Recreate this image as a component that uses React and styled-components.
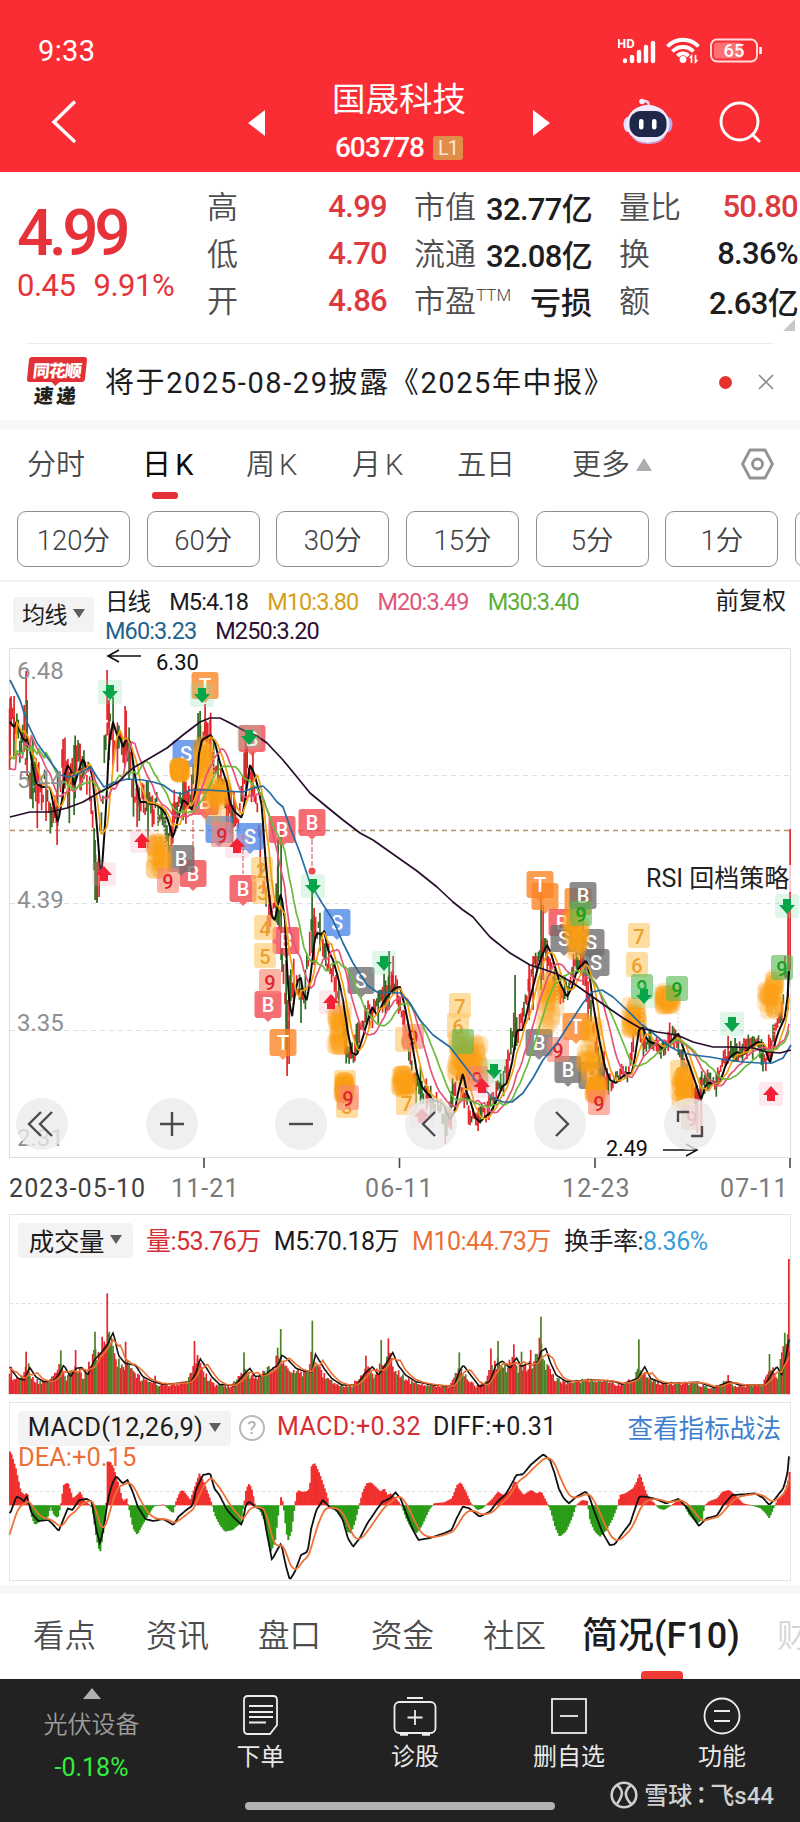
import React from "react";
import styled, { createGlobalStyle, css } from "styled-components";

const GlobalStyle = createGlobalStyle`
  * {
    box-sizing: border-box;
  }
  body {
    margin: 0;
    background: #ffffff;
    font-family: Roboto, "Noto Sans CJK SC", sans-serif;
    color: #1c1c1e;
  }
`;

const flexCenter = css`
  display: flex;
  align-items: center;
  justify-content: center;
`;

const Page = styled.div`
  width: 800px;
  height: 1822px;
  overflow: hidden;
  display: flex;
  flex-direction: column;
`;

/* ---------- header ---------- */

const Header = styled.header`
  height: 172px;
  background: #fb2d34;
  color: #ffffff;
  flex: none;
`;

const StatusBar = styled.div`
  height: 76px;
  padding: 25px 38px 0 38px;
  display: flex;
  justify-content: space-between;
  align-items: center;
`;

const Clock = styled.span`
  font-size: 29px;
  line-height: 50px;
  letter-spacing: 0.4px;
`;

const StatusIcons = styled.div`
  display: flex;
  align-items: center;
  gap: 10px;
`;

const HD = styled.text`
  font-size: 13px;
  font-weight: 700;
  fill: #ffffff;
`;

const NavBar = styled.div`
  height: 96px;
  display: grid;
  grid-template-columns: 248px 302px 1fr;
`;

const NavLeft = styled.div`
  padding: 24px 0 0 51px;
`;

const NavTitle = styled.div`
  display: flex;
  justify-content: space-between;

  > svg {
    margin-top: 34px;
  }
`;

const TitleBlock = styled.div`
  display: flex;
  flex-direction: column;
  align-items: center;
`;

const StockName = styled.div`
  font-size: 33.5px;
  line-height: 40px;
  margin-top: 4px;
`;

const StockCode = styled.div`
  display: flex;
  align-items: center;
  gap: 9px;
  margin-top: 12px;
  font-size: 28px;
  line-height: 32px;
  letter-spacing: -1.1px;
  font-weight: 500;
`;

const LevelTag = styled.span`
  ${flexCenter};
  width: 30px;
  height: 24px;
  border-radius: 3px;
  background: #e28c4a;
  color: #fbe8d8;
  font-size: 20px;
  font-weight: 400;
`;

const NavRight = styled.div`
  display: flex;
  padding: 21px 0 0 73px;
  gap: 46px;
`;

/* ---------- quote ---------- */

const Quote = styled.section`
  height: 171px;
  flex: none;
  display: grid;
  grid-template-columns: 207px 180px 27px 178px 27px 179px;
  position: relative;
`;

const PriceBlock = styled.div`
  padding: 26px 0 0 17px;
  color: #e63238;
`;

const Price = styled.div`
  font-size: 64px;
  font-weight: 500;
  line-height: 72px;
  letter-spacing: -4.4px;
`;

const Change = styled.div`
  display: flex;
  gap: 18px;
  font-size: 31px;
  line-height: 36px;
  letter-spacing: -0.5px;
  margin-top: -2px;
`;

const Facts = styled.div`
  display: flex;
  flex-direction: column;
  padding-top: 11px;
  grid-column: ${({ $col }) => $col};
`;

const Fact = styled.div`
  height: 47px;
  display: flex;
  justify-content: space-between;
  align-items: center;
  white-space: nowrap;
`;

const FactLabel = styled.span`
  font-size: 31px;
  font-weight: 350;
  color: #4e4e50;
  margin-top: -5px;

  sup {
    font-size: 17px;
    line-height: 0;
    vertical-align: 11px;
  }
`;

const FactValue = styled.span`
  font-size: 31px;
  font-weight: 500;
  letter-spacing: ${({ $wide }) => ($wide ? 0 : -0.7)}px;
  color: ${({ $up }) => ($up ? "#dd3a3f" : "#1d1d1f")};
`;

const Corner = styled.i`
  position: absolute;
  right: 5px;
  bottom: 12px;
  border-left: 12px solid transparent;
  border-bottom: 12px solid #c8c8c8;
`;

const Notice = styled.section`
  height: 77px;
  flex: none;
  margin: 0 26px;
  border-top: 1px solid #ececec;
  display: flex;
  align-items: center;
`;

const BrandMark = styled.div`
  width: 60px;
  margin: 0 18px 0 1px;
  display: flex;
  flex-direction: column;
  align-items: center;
  font-weight: 900;
`;

const BrandTop = styled.span`
  ${flexCenter};
  position: relative;
  width: 58px;
  height: 25px;
  border-radius: 3px;
  transform: skewX(-6deg);
  background: #e23136;
  color: #ffffff;
  font-size: 17px;
  letter-spacing: -1px;

  &::after {
    content: "";
    position: absolute;
    left: 24px;
    top: 24px;
    border: 5px solid transparent;
    border-top-color: #e23136;
    border-bottom-width: 0;
  }
`;

const BrandBottom = styled.span`
  margin-top: 4px;
  transform: skewX(-6deg);
  font-size: 19.5px;
  line-height: 21px;
  letter-spacing: 3px;
  color: #222222;
`;

const NoticeText = styled.span`
  font-size: 29px;
  letter-spacing: 1.6px;
  white-space: nowrap;
  flex: 1;
  margin-top: -4px;
`;

const Dot = styled.i`
  width: 13px;
  height: 13px;
  border-radius: 50%;
  background: #e6322f;
  margin-right: 26px;
`;

const Strip = styled.div`
  height: ${({ $h }) => $h}px;
  flex: none;
  background: #f7f7f8;
`;

/* ---------- period tabs ---------- */

const Periods = styled.nav`
  height: 82px;
  flex: none;
  display: flex;
  align-items: center;
  padding: 0 26px 12px 27px;
`;

const Period = styled.span`
  position: relative;
  width: ${({ $w }) => $w}px;
  margin-top: -4px;
  font-size: 29px;
  font-weight: ${({ $on }) => ($on ? 400 : 350)};
  color: ${({ $on }) => ($on ? "#0b0b0b" : "#4a4a4c")};
  word-spacing: -3px;
  white-space: nowrap;

  ${({ $on }) =>
    $on &&
    css`
      &::after {
        content: "";
        position: absolute;
        left: 10px;
        bottom: -16px;
        width: 26px;
        height: 7px;
        border-radius: 3px;
        background: #e33036;
      }
    `}
`;

const Triangle = styled.i`
  display: inline-block;
  border: ${({ $size }) => $size}px solid transparent;
  border-top-width: 0;
  border-bottom: ${({ $h }) => $h}px solid ${({ $color }) => $color};
  ${({ $down }) => $down && "transform: rotate(180deg);"}
`;

const SettingsIcon = styled.svg`
  margin-left: auto;
`;

const Minutes = styled.div`
  height: 71px;
  flex: none;
  display: flex;
  gap: 16.7px;
  padding-left: 17px;
  border-bottom: 2px solid #f0f0f1;
`;

const Minute = styled.span`
  ${flexCenter};
  flex: none;
  width: 113px;
  height: 56px;
  padding-bottom: 3px;
  border: 1px solid #8e8e90;
  border-radius: 9px;
  font-size: 27.5px;
  font-weight: 350;
  color: #404042;
`;

/* ---------- chart ---------- */

const Legend = styled.div`
  height: 66px;
  flex: none;
  display: flex;
  align-items: flex-start;
  padding: 4px 14px 0 13px;
  font-size: 23.5px;
`;

const Chip = styled.span`
  ${flexCenter};
  flex: none;
  gap: 6px;
  width: ${({ $w }) => $w}px;
  height: 35px;
  padding-bottom: 3px;
  border-radius: 4px;
  background: #f4f3f4;
  font-size: ${({ $size }) => $size}px;
  letter-spacing: ${({ $track }) => $track || -0.4}px;
  white-space: nowrap;
`;

const Averages = styled.div`
  flex: 1;
  display: flex;
  flex-wrap: wrap;
  column-gap: 19px;
  padding: 0 90px 0 11px;
  line-height: 29px;
  letter-spacing: -0.9px;
  margin-top: 2px;
`;

const Tint = styled.span`
  color: ${({ $c }) => $c};
`;

const Restore = styled.span`
  line-height: 30px;
`;

const LegendChip = styled.div`
  padding-top: 11px;
`;

const ChartBox = styled.div`
  height: 520px;
  flex: none;
  position: relative;
  svg {
    display: block;
  }
`;

const Controls = styled.div`
  position: absolute;
  left: 16px;
  right: 84px;
  top: 450px;
  display: flex;
  justify-content: space-between;
`;

const RoundButton = styled.span`
  ${flexCenter};
  width: 52px;
  height: 52px;
  border-radius: 50%;
  background: rgba(235, 235, 236, 0.78);
`;

const ChartText = styled.text`
  font-size: ${({ $size }) => $size || 24}px;
  fill: ${({ $fill }) => $fill || "#8f8f91"};
`;

const MarkText = styled.text`
  font-size: ${({ $size }) => $size}px;
  font-weight: 500;
  text-anchor: middle;
`;

const Dates = styled.div`
  height: 46px;
  flex: none;
  display: grid;
  grid-template-columns: 162px 194px 197px 158px 1fr;
  padding: 4px 9px 0 9px;
  font-size: 25px;
  line-height: 34px;
  color: #7a7a7c;
  letter-spacing: 1.1px;
  white-space: nowrap;

  span:first-child {
    color: #404042;
  }
`;

const Panel = styled.section`
  height: ${({ $h }) => $h}px;
  flex: none;
  margin: 0 9px ${({ $gap }) => $gap}px;
  border: 1px solid #e4e4e6;
  position: relative;

  > svg {
    position: absolute;
    left: -10px;
    top: -1px;
  }
`;

const PanelLegend = styled.div`
  position: relative;
  z-index: 1;
  display: flex;
  align-items: center;
  gap: ${({ $gap }) => $gap}px;
  padding: 8px 8px 0;
  font-size: 25px;
  letter-spacing: ${({ $track }) => $track}px;
  white-space: nowrap;
`;

const Reading = styled.span`
  color: ${({ $c }) => $c || "#1c1c1e"};
  margin-top: -4px;
`;

const SecondLine = styled.div`
  position: relative;
  z-index: 1;
  padding-left: 8px;
  margin-top: -3px;
  font-size: 25.5px;
  line-height: 28px;
  letter-spacing: 0;
  color: #ea7038;
`;

const Help = styled.span`
  ${flexCenter};
  width: 26px;
  height: 26px;
  margin: -2px 0 0 -4px;
  border: 2px solid #b9b9bb;
  border-radius: 50%;
  color: #a9a9ab;
  font-size: 19px;
`;

const Guide = styled.span`
  margin: -4px 1px 0 auto;
  font-size: 25.6px;
  letter-spacing: 0;
  color: #3d7fce;
`;

/* ---------- bottom ---------- */

const Tabs = styled.nav`
  height: 85px;
  flex: none;
  display: flex;
  align-items: center;
  padding: 0 0 0 33px;
  overflow: hidden;
`;

const Tab = styled.span`
  position: relative;
  flex: none;
  width: ${({ $w }) => $w}px;
  line-height: 85px;
  white-space: nowrap;
  font-size: ${({ $on }) => ($on ? 36 : 31.5)}px;
  font-weight: ${({ $on }) => ($on ? 500 : 350)};
  color: ${({ $on, $faded }) => ($on ? "#1c1c1e" : $faded ? "#d5d5d7" : "#4c4c4e")};

  ${({ $on }) =>
    $on &&
    css`
      &::after {
        content: "";
        position: absolute;
        left: 59px;
        bottom: 0;
        width: 42px;
        height: 8px;
        border-radius: 4px 4px 0 0;
        background: #f23a34;
      }
    `}
`;

const BottomBar = styled.footer`
  height: 143px;
  flex: none;
  background: #222222;
  color: #e9e9e9;
  display: grid;
  grid-template-columns: 185px 151px 158px 150px 156px;
  position: relative;
`;

const Sector = styled.div`
  display: flex;
  flex-direction: column;
  align-items: center;
  padding: 9px 2px 0 0;
  font-size: 24px;
  color: #9c9c9c;
  line-height: 36px;
`;

const SectorName = styled.span`
  margin-top: 8px;
  font-weight: 350;
`;

const Fall = styled.span`
  margin-top: 7px;
  color: #33ee3a;
  font-size: 25px;
`;

const Action = styled.div`
  display: flex;
  flex-direction: column;
  align-items: center;
  padding-top: 15px;
  font-size: 24px;
  line-height: 34px;

  svg {
    margin-bottom: 4px;
  }
`;

const HomeBar = styled.i`
  position: absolute;
  left: 245px;
  bottom: 12px;
  width: 310px;
  height: 8px;
  border-radius: 4px;
  background: #b3b3b3;
`;

const Watermark = styled.div`
  position: absolute;
  right: 26px;
  bottom: 9px;
  display: flex;
  align-items: center;
  gap: 6px;
  font-size: 24px;
  line-height: 34px;
  font-weight: 500;
  color: #cfcfcf;
`;

const Colon = styled.span`
  font-family: "Noto Sans CJK TC", sans-serif;
  margin: 0 -3px;
`;

/* ---------- chart data ---------- */

const BARS = 536;
const LEFT = 9.5;
const STEP = 781 / BARS;

// small seeded generator so that the bars are the same on every render
const seeded = (seed) => {
  let n = seed * 7919 + 104729;
  const next = () => {
    n = (n * 16807) % 2147483647;
    return n / 2147483647;
  };
  next();
  next();
  return next;
};

const toPoints = (text) =>
  text
    .trim()
    .split(/\s+/)
    .map((p) => p.split(",").map(Number));

const at = (points, x) => {
  if (x <= points[0][0]) return points[0][1];
  for (let i = 1; i < points.length; i++) {
    const [x1, y1] = points[i];
    if (x <= x1) {
      const [x0, y0] = points[i - 1];
      return y0 + ((y1 - y0) * (x - x0)) / (x1 - x0 || 1);
    }
  }
  return points[points.length - 1][1];
};

const sample = (points) => Array.from({ length: BARS }, (_, i) => at(points, LEFT + i * STEP));

const average = (values, count, before) =>
  values.map((_, i) => {
    let sum = 0;
    for (let k = 0; k < count; k++) sum += i - k * 5 >= 0 ? values[i - k * 5] : before;
    return sum / count;
  });

const linePath = (values) =>
  values.map((y, i) => `${i ? "L" : "M"}${(LEFT + i * STEP).toFixed(1)} ${y.toFixed(1)}`).join("");

const curve = (points) => "M" + points.map((p) => p.join(" ")).join("L");

const MA5 = toPoints(`10,722 14,727 17,722 22,737 26,742 28,737 32,763 36,783 42,787 50,787 53,803
  58,823 62,800 65,773 68,765 72,773 74,787 78,773 83,758 86,768 90,767 93,780 97,827 101,880 104,840
  107,790 109,743 113,722 117,735 120,738 123,747 127,738 131,743 133,763 137,787 140,802 145,802
  150,803 157,805 163,810 168,820 173,838 177,823 183,800 187,803 192,810 197,780 199,753 202,740
  207,737 211,735 215,743 220,763 227,783 230,803 235,812 242,818 246,793 250,765 254,773 258,787
  262,807 265,853 268,887 272,917 275,920 278,905 281,893 285,920 287,967 289,1000 292,1017 295,993
  298,980 301,978 303,993 307,1000 310,980 312,963 315,937 318,933 322,935 324,930 328,950 333,960
  338,977 343,1000 348,1033 352,1053 357,1055 362,1040 367,1023 372,1007 377,1015 383,1003 390,993
  395,988 400,987 405,1007 412,1043 417,1073 422,1087 427,1093 433,1100 443,1103 450,1120 455,1110
  458,1093 463,1073 467,1093 470,1100 475,1117 480,1122 485,1117 490,1113 497,1100 502,1087 507,1083
  512,1063 517,1030 523,1030 528,1007 533,987 538,967 543,953 547,945 551,953 555,967 560,983 567,997
  572,987 577,970 582,965 586,960 589,970 593,1003 597,1027 600,1043 605,1067 610,1080 616,1083
  622,1077 627,1073 632,1073 635,1057 639,1030 643,1027 647,1040 652,1043 658,1043 663,1050 670,1043
  678,1033 683,1047 690,1067 697,1087 701,1100 705,1087 708,1083 715,1083 720,1083 725,1067 730,1057
  737,1052 743,1055 750,1047 758,1042 763,1043 770,1063 773,1050 778,1033 785,1017 788,993 791,930`);

const MA60 = toPoints(`10,680 20,700 27,722 37,743 47,757 55,768 60,775 70,777 80,773 91,767 97,777
  104,787 113,783 127,779 143,780 153,782 163,785 173,792 182,794 190,790 207,790 223,791 243,792
  253,788 263,786 270,793 277,802 283,807 290,827 300,853 310,883 322,903 333,920 343,943 353,963
  367,985 377,992 400,993 410,1003 420,1020 433,1035 450,1047 460,1060 473,1077 483,1088 493,1098
  503,1102 512,1102 523,1093 533,1078 543,1060 557,1043 570,1023 583,1003 592,992 602,990 613,997
  627,1010 640,1023 653,1033 667,1045 680,1052 693,1055 710,1057 727,1060 743,1062 760,1063 772,1063
  783,1058 791,1045`);

const MA250 = toPoints(`10,817 30,812 50,812 67,808 83,802 100,792 117,783 133,768 150,758 167,748
  183,735 200,722 210,718 220,718 230,723 243,730 257,736 267,743 283,760 297,777 310,793 327,807
  343,820 360,833 373,840 400,859 417,871 437,887 453,902 463,910 473,917 490,937 510,953 530,965
  543,969 557,974 573,983 590,995 607,1007 623,1018 640,1028 657,1032 677,1035 693,1042 713,1047
  733,1047 753,1048 767,1052 780,1053 791,1050`);

const ma5 = sample(MA5);
const ma10 = average(ma5, 2, 790);
const ma20 = average(ma5, 4, 784);
const ma30 = average(ma5, 6, 765);

// x, top, bottom, rising
const SPIKES = [
  [10, 698, 760, 1],
  [14, 696, 740, 1],
  [26, 671, 750, 1],
  [27, 700, 760, 0],
  [57, 790, 845, 1],
  [63, 739, 800, 1],
  [74, 745, 815, 0],
  [80, 744, 790, 1],
  [95, 840, 900, 0],
  [97, 862, 903, 0],
  [99, 850, 897, 1],
  [107, 670, 720, 1],
  [109, 700, 760, 1],
  [113, 697, 730, 0],
  [125, 706, 750, 1],
  [137, 790, 827, 1],
  [198, 713, 760, 0],
  [200, 711, 750, 0],
  [205, 704, 740, 1],
  [210, 720, 760, 1],
  [246, 747, 800, 1],
  [278, 840, 925, 0],
  [281, 830, 960, 0],
  [287, 1000, 1076, 1],
  [289, 990, 1064, 1],
  [286, 960, 1050, 0],
  [312, 880, 953, 0],
  [314, 915, 955, 1],
  [389, 951, 1010, 0],
  [393, 956, 990, 1],
  [450, 1115, 1128, 1],
  [478, 1110, 1131, 1],
  [515, 975, 1050, 0],
  [529, 965, 1020, 1],
  [533, 956, 1010, 1],
  [541, 891, 990, 0],
  [543, 905, 980, 1],
  [583, 920, 985, 1],
  [697, 1085, 1133, 1],
  [701, 1080, 1136, 1],
  [728, 1036, 1060, 1],
  [735, 1038, 1055, 0],
  [790, 829, 970, 1],
  [788, 910, 1010, 1],
];

const priceBars = (() => {
  const random = seeded(77);
  const bars = [];
  for (let i = 0; i < BARS; i += 1) {
    const x = LEFT + i * STEP;
    const next = ma5[Math.min(BARS - 1, i + 3)];
    const range = x < 150 ? 27 : x < 330 ? 23 : x < 620 ? 14 : 10;
    const mid = next + (random() - 0.5) * range;
    const half = 3 + random() * random() * range * 1.3;
    bars.push([x, mid - half, mid + half, random() > 0.4 ? 1 : 0]);
  }
  return bars.concat(SPIKES);
})();

const VOLUME = toPoints(`18,485 35,520 48,525 58,487 70,515 85,530 105,528 115,510 125,480 138,515
  150,490 160,487 172,510 185,465 200,440 210,420 222,382 232,450 245,475 265,480 280,515 300,530
  320,538 350,535 375,530 385,500 392,460 405,490 415,515 430,538 460,542 480,505 490,490 500,515
  520,510 535,490 545,480 553,450 565,465 580,490 600,500 612,500 618,447 635,490 650,520 670,540
  700,540 715,505 730,485 742,510 755,480 770,442 780,480 795,510 815,530 850,540 890,545 900,500
  908,480 920,505 940,545 960,530 972,480 985,468 1000,490 1012,458 1022,485 1035,475 1045,480
  1055,470 1060,440 1070,430 1078,470 1090,510 1110,530 1160,525 1200,528 1220,538 1250,520 1264,485
  1275,520 1300,535 1370,532 1400,548 1430,530 1450,540 1500,540 1515,500 1523,485 1532,510 1540,460
  1548,390`).map(([x, y]) => [x / 1.96, y / 3 - 9]);

const VOLUME_SPIKES = toPoints(`22,485,1 51,440,1 56,475,0 119,436,0 148,435,1 186,380,0 184,435,0
  200,395,1 210,265,1 214,380,0 246,410,1 174,470,1 381,408,1 387,450,1 304,512,1 478,442,0 544,428,0
  550,372,0 612,347,0 717,452,1 747,405,0 761,400,1 900,442,0 962,430,1 976,408,0 1007,418,1
  1022,440,0 1040,435,1 1060,335,0 1057,398,1 1252,403,0 1508,447,0 1427,510,1 1541,420,1
  1546,162,1`).map(([x, y, up]) => [x / 1.96, y / 3 - 9, up]);

const volume5 = sample(VOLUME);
const volume10 = average(volume5, 2, 155);

const volumeBars = (() => {
  const random = seeded(2023);
  return volume5
    .map((_, i) => {
      const level = 180 - volume5[Math.min(BARS - 1, i + 3)];
      return [LEFT + i * STEP, 180 - level * (0.75 + random() * 0.38), random() > 0.36 ? 1 : 0];
    })
    .concat(VOLUME_SPIKES);
})();

const macdPoint = ([x, y]) => [x / 1.96, y / 3 - 7];

const HISTOGRAM = toPoints(`20,170 30,220 40,290 48,300 52,290 56,325 62,370 68,390 80,375 92,370
  98,335 105,360 112,370 118,331 124,270 132,262 142,310 150,300 156,290 165,318 172,325 180,340
  188,430 195,475 203,400 207,331 209,200 215,200 222,220 230,260 240,320 247,310 252,340 260,400
  268,420 278,390 288,365 300,335 320,328 338,355 344,320 352,290 357,285 365,300 372,315 380,280
  390,235 398,260 408,300 414,325 420,360 430,390 440,410 455,405 470,385 477,331 482,280 488,265
  494,290 498,325 508,345 518,380 525,440 530,470 538,440 545,350 550,305 554,325 558,380 563,440
  570,410 577,331 582,285 590,290 600,290 606,280 610,210 616,205 625,235 632,265 640,300 644,331
  655,345 670,370 680,410 687,415 695,380 703,331 710,290 718,265 726,262 735,275 745,290 752,280
  758,300 765,295 772,305 780,320 786,331 795,370 805,400 815,415 825,395 840,345 850,325 870,322
  885,310 895,270 902,262 912,290 922,325 935,345 945,340 955,325 965,310 975,290 985,300 1000,285
  1008,255 1015,280 1025,300 1040,285 1050,295 1060,290 1070,320 1078,345 1088,400 1096,425 1108,410
  1120,370 1128,331 1140,315 1150,318 1156,380 1165,410 1175,425 1188,405 1200,370 1210,331 1214,300
  1225,295 1240,280 1247,260 1253,235 1260,270 1270,310 1280,322 1290,340 1300,345 1315,331 1330,312
  1340,331 1350,360 1365,385 1375,375 1380,331 1390,318 1405,310 1415,290 1428,285 1440,300 1455,325
  1470,330 1490,340 1500,355 1507,370 1515,340 1525,310 1535,300 1545,250 1549,200`).map(macdPoint);

const DIFF = toPoints(`20,355 32,305 40,310 48,320 52,300 62,355 75,378 95,375 105,390 115,408
  125,370 133,340 142,345 155,315 170,312 180,320 188,400 196,445 203,400 212,310 220,265 228,243
  240,265 250,255 260,290 270,335 285,372 300,378 320,372 340,390 350,365 365,345 377,332 385,280
  398,240 412,235 420,280 430,300 445,345 460,370 474,390 482,330 488,320 500,335 515,345 525,430
  533,495 545,460 551,445 560,510 568,555 578,530 590,480 603,470 610,400 620,345 633,315 645,335
  660,345 672,375 682,430 692,455 705,430 720,385 740,340 750,320 765,310 775,292 785,310 795,350
  808,400 820,435 845,428 870,415 885,405 895,370 907,335 920,340 940,365 960,350 975,320 990,300
  1000,275 1012,240 1025,238 1040,210 1055,190 1065,178 1078,195 1087,235 1095,280 1105,310 1115,325
  1130,305 1148,290 1155,305 1165,350 1180,410 1195,450 1205,448 1220,415 1235,385 1245,340 1253,305
  1265,305 1285,312 1305,325 1330,312 1345,335 1360,370 1370,393 1385,370 1405,362 1418,330 1435,300
  1460,298 1480,295 1495,308 1508,330 1520,310 1535,280 1543,240 1549,145`).map(macdPoint);

const diff = sample(DIFF);
const dea = (() => {
  let last = 138;
  return diff.map((v) => {
    last = last * 0.8 + v * 0.2;
    return last;
  });
})();

/* ---------- signals on the price chart ---------- */

const COLORS = {
  red: "#f0444b",
  blue: "#4d86e8",
  orange: "#fb8423",
  gray: "#6e6c6b",
};

// x, y, letter, colour
const TRADES = [
  [205, 686, "T", "orange"],
  [186, 754, "S", "blue"],
  [252, 739, "B", "red"],
  [193, 874, "B", "red"],
  [181, 859, "B", "gray"],
  [219, 830, "", "blue"],
  [250, 837, "S", "blue"],
  [205, 802, "B", "red"],
  [282, 830, "B", "red"],
  [312, 823, "B", "red"],
  [243, 889, "B", "red"],
  [286, 941, "B", "red"],
  [268, 1005, "B", "red"],
  [283, 1043, "T", "orange"],
  [337, 923, "S", "blue"],
  [361, 981, "S", "gray"],
  [545, 897, "", "orange"],
  [540, 885, "T", "orange"],
  [562, 923, "B", "red"],
  [564, 939, "S", "gray"],
  [578, 902, "", "orange"],
  [583, 896, "B", "gray"],
  [591, 943, "S", "gray"],
  [596, 963, "S", "gray"],
  [539, 1043, "B", "gray"],
  [576, 1027, "T", "orange"],
  [568, 1070, "B", "gray"],
  [592, 1076, "B", "gray"],
];

// clouds of stacked countdown tags: x, y, half width, half height
const CLOUDS = [
  [161, 856, 7, 14],
  [180, 770, 2, 3],
  [203, 770, 2, 26],
  [217, 800, 6, 18],
  [339, 1028, 4, 18],
  [344, 1088, 2, 6],
  [404, 1080, 5, 8],
  [463, 1058, 8, 24],
  [474, 1062, 6, 18],
  [575, 935, 6, 16],
  [550, 1003, 6, 26],
  [590, 1050, 6, 30],
  [596, 1088, 3, 6],
  [634, 1018, 4, 14],
  [667, 998, 5, 9],
  [683, 1088, 4, 14],
  [771, 995, 5, 16],
];

// x, y, digit, tint
const COUNTS = [
  [262, 870, "2", "y"],
  [263, 892, "3", "y"],
  [265, 928, "4", "y"],
  [265, 956, "5", "y"],
  [345, 1083, "6", "y"],
  [347, 1106, "3", "y"],
  [406, 1040, "6", "y"],
  [407, 1103, "7", "y"],
  [460, 1006, "7", "y"],
  [458, 1026, "6", "y"],
  [639, 936, "7", "y"],
  [637, 965, "6", "y"],
  [681, 1073, "1", "y"],
];

const LAST_COUNTS = [
  [270, 982, "9", "r"],
  [168, 881, "9", "r"],
  [222, 835, "9", "r"],
  [348, 1098, "9", "r"],
  [413, 1037, "9", "r"],
  [463, 1042, "", "g"],
  [477, 1079, "9", "r"],
  [581, 914, "9", "g"],
  [558, 1050, "9", "r"],
  [599, 1103, "9", "r"],
  [642, 987, "9", "g"],
  [677, 989, "9", "g"],
  [692, 1118, "9", "r"],
  [782, 968, "9", "g"],
];

const TINTS = {
  y: { back: "#fdc869", text: "#eda12c" },
  r: { back: "#f98570", text: "#dd2530" },
  g: { back: "#58b955", text: "#16a01c" },
};

// x, y, direction
const ARROWS = [
  [110, 692, "down"],
  [202, 695, "down"],
  [249, 737, "down"],
  [313, 886, "down"],
  [384, 963, "down"],
  [494, 1071, "down"],
  [644, 996, "down"],
  [732, 1024, "down"],
  [787, 906, "down"],
  [142, 841, "up"],
  [104, 874, "up"],
  [237, 846, "up"],
  [331, 1002, "up"],
  [482, 1086, "up"],
  [422, 1116, "up"],
  [771, 1094, "up"],
];

const Trade = ({ x, y, letter, color }) => (
  <g>
    <rect x={x - 13.5} y={y - 14} width="27" height="27" rx="3" fill={COLORS[color]} opacity="0.78" />
    <path d={`M${x - 4} ${y + 13}h8l-4 4z`} fill={COLORS[color]} opacity="0.78" />
    {letter && (
      <MarkText x={x} y={y + 7} $size={20} fill="#ffffff">
        {letter}
      </MarkText>
    )}
  </g>
);

const Count = ({ x, y, digit, tint }) => (
  <g>
    <rect x={x - 11} y={y - 13} width="22" height="25" rx="3" fill={TINTS[tint].back} opacity="0.62" />
    {digit && (
      <MarkText x={x} y={y + 8} $size={20} fill={TINTS[tint].text}>
        {digit}
      </MarkText>
    )}
  </g>
);

const Arrow = ({ x, y, dir }) => {
  const down = dir === "down";
  const s = down ? 1 : -1;
  return (
    <g>
      <rect x={x - 12} y={y - 12} width="24" height="24" rx="3" fill={down ? "#7fe0a8" : "#f9a5b5"} opacity="0.25" />
      <path
        d={`M${x - 4} ${y - 7 * s}h8v${6 * s}h4l-8 ${9 * s}l-8 ${-9 * s}h4z`}
        fill={down ? "#06a548" : "#f51f36"}
      />
    </g>
  );
};

const Cloud = ({ x, y, w, h, seed }) => {
  const random = seeded(seed);
  return (
    <g fill="#fb9d15">
      {Array.from({ length: 22 }, (_, i) => (
        <rect
          key={i}
          x={x - 9 + (random() * 2 - 1) * w}
          y={y - 10 + (random() * 2 - 1) * h}
          width="18"
          height="20"
          rx="6"
          opacity="0.26"
        />
      ))}
    </g>
  );
};

const PriceChart = () => (
  <svg width="800" height="520" viewBox="0 648 800 520">
    <path d="M9.5 1157V648.5H790.5V1157" fill="none" stroke="#dedee0" />
    <path d="M9 1157.5H791" stroke="#dedee0" />
    <g stroke="#dfdfe2" strokeDasharray="5 4">
      <path d="M10 775.5H790" />
      <path d="M10 903.5H790" />
      <path d="M10 1030.5H790" />
    </g>
    <path d="M10 830.5H790" stroke="#b2946a" strokeDasharray="5 4" strokeWidth="1.3" />

    {priceBars.map(([x, top, bottom, up], i) => (
      <rect
        key={i}
        x={x - 0.75}
        y={top}
        width={1.7}
        height={bottom - top}
        fill={up ? "#e3262b" : "#2f6b22"}
      />
    ))}

    {TRADES.map(([x, y, letter, color]) => (
      <Trade key={`${x}-${y}`} x={x} y={y} letter={letter} color={color} />
    ))}
    {COUNTS.map(([x, y, digit, tint]) => (
      <Count key={`${x}-${y}`} x={x} y={y} digit={digit} tint={tint} />
    ))}
    {CLOUDS.map(([x, y, w, h], i) => (
      <Cloud key={i} x={x} y={y} w={w} h={h} seed={i + 3} />
    ))}
    {LAST_COUNTS.map(([x, y, digit, tint]) => (
      <Count key={`${x}-${y}`} x={x} y={y} digit={digit} tint={tint} />
    ))}

    <g fill="none" strokeWidth="1.7" strokeLinejoin="round">
      <path d={linePath(ma5)} stroke="#0d0a0a" strokeWidth="2" />
      <path d={linePath(ma10)} stroke="#f2a012" />
      <path d={linePath(ma20)} stroke="#e75377" />
      <path d={linePath(ma30)} stroke="#6cb93b" />
      <path d={curve(MA60)} stroke="#256ba3" />
      <path d={curve(MA250)} stroke="#260c2b" />
    </g>

    <g>
      <ChartText x="17" y="679">6.48</ChartText>
      <ChartText x="17" y="788">5.44</ChartText>
      <ChartText x="17" y="908">4.39</ChartText>
      <ChartText x="17" y="1031">3.35</ChartText>
      <ChartText x="17" y="1146">2.31</ChartText>
    </g>

    <g stroke="#d5464c" strokeDasharray="5 2">
      <path d="M193 820V860" />
      <path d="M243 835V874" />
      <path d="M312 840V870" />
    </g>
    <g stroke="#e2d7a8" strokeDasharray="2 2">
      <path d="M158 815V840" />
      <path d="M165 815V845" />
      <path d="M214 750V785" />
      <path d="M557 980V1035" />
      <path d="M678 1005V1030" />
      <path d="M774 1010V1035" />
      <path d="M642 1002V1025" />
    </g>
    <circle cx="312" cy="871" r="3.5" fill="#ee4b50" />

    {ARROWS.map(([x, y, dir]) => (
      <Arrow key={`${x}-${y}`} x={x} y={y} dir={dir} />
    ))}

    <path d="M141 656H108M119 650L108 656L119 662" fill="none" stroke="#111111" strokeWidth="1.7" />
    <ChartText x="156" y="670" $size={22} $fill="#111111">6.30</ChartText>
    <rect x="646" y="865" width="145" height="27" fill="#ffffff" opacity="0.75" />
    <ChartText x="646" y="887" $size={25} $fill="#222222">RSI 回档策略</ChartText>
    <path d="M663 1150H697M686 1144L697 1150L686 1156" fill="none" stroke="#111111" strokeWidth="1.5" />
    <ChartText x="606" y="1156" $size={21.5} $fill="#111111">2.49</ChartText>
    <path d="M204 1158V1168M399.5 1158V1168M595 1158V1168M790 1158V1168" stroke="#4a4a4c" strokeWidth="1.6" />
  </svg>
);

const VolumeChart = () => (
  <svg width="800" height="181" viewBox="0 0 800 181">
    <path d="M10 89.5H790" stroke="#dcdce2" strokeDasharray="3 3" />
    {volumeBars.map(([x, top, up], i) => (
      <rect
        key={i}
        x={x - 0.75}
        y={top}
        width={1.7}
        height={180 - top}
        fill={up ? "#e5262c" : "#4c8128"}
      />
    ))}
    <path d={linePath(volume5)} fill="none" stroke="#171310" strokeWidth="1.6" />
    <path d={linePath(volume10)} fill="none" stroke="#ee7030" strokeWidth="1.6" />
  </svg>
);

const MacdChart = () => (
  <svg width="800" height="179" viewBox="0 0 800 179">
    <path d="M10 89.5H790" stroke="#dcdce2" strokeDasharray="3 3" />
    {sample(HISTOGRAM).map((y, i) => (
      <rect
        key={i}
        x={LEFT + i * STEP - 0.5}
        y={Math.min(y, 103.3)}
        width={STEP + 0.6}
        height={Math.max(0.6, Math.abs(y - 103.3))}
        fill={y < 103.3 ? "#f0302e" : "#2a9b16"}
      />
    ))}
    <path d={linePath(diff)} fill="none" stroke="#111111" strokeWidth="1.8" />
    <path d={linePath(dea)} fill="none" stroke="#ee7236" strokeWidth="1.8" />
  </svg>
);

/* ---------- icons ---------- */

const SignalIcon = () => (
  <svg width="38" height="26" viewBox="619 37 38 26">
    <HD x="618" y="47">HD</HD>
    <g stroke="#ffffff" strokeWidth="4.4" strokeLinecap="round">
      <path d="M626 60V59.5M633 60V56M640 60V51M647 60V46M654 60V42" />
    </g>
  </svg>
);

const WifiIcon = () => (
  <svg width="34" height="27" viewBox="0 0 34 27">
    <g fill="none" stroke="#ffffff" strokeWidth="3.8">
      <path d="M1.5 9.5C10 .5 24 .5 32.500 9.5" />
      <path d="M6.5 14.5C12 8.5 22 8.5 27.500 14.5" />
      <path d="M11.5 19C14.500 15.5 19.500 15.5 22.500 19" />
    </g>
    <circle cx="17" cy="22.5" r="3.4" fill="#ffffff" />
    <path d="M25.500 26V19l-2 2M29.500 18v7l2-2" fill="none" stroke="#ffffff" strokeWidth="1.7" />
  </svg>
);

const BatteryIcon = () => (
  <svg width="52" height="25" viewBox="0 0 52 25">
    <rect x="1" y="1.500" width="46" height="22" rx="6" fill="none" stroke="#ffdcdc" strokeWidth="1.9" />
    <rect x="4" y="4.500" width="28" height="16" rx="3" fill="#ff7072" />
    <path d="M50.500 9v7" stroke="#ffffff" strokeWidth="2.5" />
    <MarkText x="24" y="19" $size={18.5} fill="#ffffff">65</MarkText>
  </svg>
);

const RobotIcon = () => (
  <svg width="50" height="48" viewBox="623 97 50 48">
    <path d="M649 107c0-5-1-6-6-6" fill="none" stroke="#e9dcf4" strokeWidth="2.5" />
    <circle cx="642" cy="101.500" r="2.8" fill="#f8ecf6" />
    <ellipse cx="628" cy="124.500" rx="4.500" ry="7.500" fill="#e6e0fb" />
    <ellipse cx="668" cy="124.500" rx="4.500" ry="7.500" fill="#b7aaf5" />
    <ellipse cx="648" cy="124" rx="21.500" ry="19" fill="#eeebff" />
    <path d="M631 134c8 12 27 12 35 0-2 7-9 10-17.500 10S633 141 631 134z" fill="#b9aef0" />
    <rect x="629.500" y="111" width="37" height="26" rx="11.500" fill="#1f2848" />
    <rect x="639" y="119" width="4.500" height="10.500" rx="2.200" fill="#ffffff" />
    <rect x="652" y="119" width="4.500" height="10.500" rx="2.200" fill="#ffffff" />
  </svg>
);

const outline = { fill: "none", stroke: "#ededed", strokeWidth: 1.8 };

const OrderIcon = () => (
  <svg width="36" height="42" viewBox="0 0 36 42" {...outline}>
    <path d="M5 2h25q4 0 4 4v25l-7 9H5q-4 0-4-4V6q0-4 4-4zM6 12h24M6 18h24M6 23h24M6 28.500h17" />
  </svg>
);

const DiagnoseIcon = () => (
  <svg width="44" height="42" viewBox="0 0 44 42" {...outline}>
    <rect x="1.500" y="8" width="41" height="31" rx="5" />
    <path d="M14 4h16M22 16v15M14.500 23.500h15" />
    <path d="M7 40.500h8M29 40.500h8" strokeWidth="2.5" />
  </svg>
);

const RemoveIcon = () => (
  <svg width="36" height="42" viewBox="0 0 36 42" {...outline}>
    <rect x="1" y="5" width="34" height="34" />
    <path d="M9 22h18" />
  </svg>
);

const MenuIcon = () => (
  <svg width="38" height="42" viewBox="0 0 38 42" {...outline}>
    <circle cx="19" cy="22" r="17.500" />
    <path d="M11 17h16M11 27h16" />
  </svg>
);

const CONTROLS = [
  "M-1 -12L-13 0L-1 12M10 -12L-2 0L10 12",
  "M-12 0H12M0 -12V12",
  "M-12 0H12",
  "M4 -12L-8 0L4 12",
  "M-4 -12L8 0L-4 12",
  "M-12 -2V-12H-1M12 2V12H1",
];

const MINUTES = ["120", "60", "30", "15", "5", "1", ""];

const App = () => (
  <>
    <GlobalStyle />
    <Page>
      <Header>
        <StatusBar>
          <Clock>9:33</Clock>
          <StatusIcons>
            <SignalIcon />
            <WifiIcon />
            <BatteryIcon />
          </StatusIcons>
        </StatusBar>
        <NavBar>
          <NavLeft>
            <svg width="26" height="44" viewBox="0 0 26 44" fill="none" stroke="#ffffff" strokeWidth="3.4">
              <path d="M24 1.500L3 22L24 42" />
            </svg>
          </NavLeft>
          <NavTitle>
            <svg width="17" height="26" viewBox="0 0 17 26" fill="#ffffff">
              <path d="M17 0V26L0 13z" />
            </svg>
            <TitleBlock>
              <StockName>国晟科技</StockName>
              <StockCode>
                603778<LevelTag>L1</LevelTag>
              </StockCode>
            </TitleBlock>
            <svg width="17" height="26" viewBox="0 0 17 26" fill="#ffffff">
              <path d="M0 0V26L17 13z" />
            </svg>
          </NavTitle>
          <NavRight>
            <RobotIcon />
            <svg width="44" height="46" viewBox="720 97 44 46" fill="none" stroke="#ffffff" strokeWidth="2.9">
              <circle cx="740.500" cy="121.500" r="18.500" />
              <path d="M753 134l8 8" />
            </svg>
          </NavRight>
        </NavBar>
      </Header>

      <Quote>
        <PriceBlock>
          <Price>4.99</Price>
          <Change>
            <span>0.45</span>
            <span>9.91%</span>
          </Change>
        </PriceBlock>
        <Facts $col={2}>
          <Fact><FactLabel>高</FactLabel><FactValue $up>4.99</FactValue></Fact>
          <Fact><FactLabel>低</FactLabel><FactValue $up>4.70</FactValue></Fact>
          <Fact><FactLabel>开</FactLabel><FactValue $up>4.86</FactValue></Fact>
        </Facts>
        <Facts $col={4}>
          <Fact><FactLabel>市值</FactLabel><FactValue>32.77亿</FactValue></Fact>
          <Fact><FactLabel>流通</FactLabel><FactValue>32.08亿</FactValue></Fact>
          <Fact>
            <FactLabel>市盈<sup>TTM</sup></FactLabel>
            <FactValue $wide>亏损</FactValue>
          </Fact>
        </Facts>
        <Facts $col={6}>
          <Fact><FactLabel>量比</FactLabel><FactValue $up>50.80</FactValue></Fact>
          <Fact><FactLabel>换</FactLabel><FactValue>8.36%</FactValue></Fact>
          <Fact><FactLabel>额</FactLabel><FactValue>2.63亿</FactValue></Fact>
        </Facts>
        <Corner />
      </Quote>

      <Notice>
        <BrandMark>
          <BrandTop>同花顺</BrandTop>
          <BrandBottom>速递</BrandBottom>
        </BrandMark>
        <NoticeText>将于2025-08-29披露《2025年中报》</NoticeText>
        <Dot />
        <svg width="16" height="16" viewBox="0 0 16 16" stroke="#8c8c8e" strokeWidth="1.6">
          <path d="M1 1L15 15M15 1L1 15" />
        </svg>
      </Notice>
      <Strip $h={9} />

      <Periods>
        <Period $w={115}>分时</Period>
        <Period $w={104} $on>日 K</Period>
        <Period $w={106}>周 K</Period>
        <Period $w={105}>月 K</Period>
        <Period $w={115}>五日</Period>
        <Period $w={64}>更多</Period>
        <Triangle $size={8} $h={13} $color="#adadaf" />
        <SettingsIcon width="33" height="34" viewBox="0 0 33 34" fill="none" stroke="#929294" strokeWidth="2.8">
          <path d="M9 3h15l7.500 14l-7.500 14H9L1.500 17z" strokeLinejoin="round" />
          <circle cx="16.500" cy="17" r="5" />
        </SettingsIcon>
      </Periods>
      <Minutes>
        {MINUTES.map((m) => (
          <Minute key={m}>{m && `${m}分`}</Minute>
        ))}
      </Minutes>

      <Legend>
        <LegendChip>
          <Chip $w={81} $size={23}>
            均线 <Triangle $size={6.5} $h={9} $color="#5e5e60" $down />
          </Chip>
        </LegendChip>
        <Averages>
          <span>日线</span>
          <span>M5:4.18</span>
          <Tint $c="#d6a019">M10:3.80</Tint>
          <Tint $c="#e0567a">M20:3.49</Tint>
          <Tint $c="#5cae36">M30:3.40</Tint>
          <Tint $c="#22628f">M60:3.23</Tint>
          <Tint $c="#2c0f33">M250:3.20</Tint>
        </Averages>
        <Restore>前复权</Restore>
      </Legend>

      <ChartBox>
        <PriceChart />
        <Controls>
          {CONTROLS.map((d) => (
            <RoundButton key={d}>
              <svg width="32" height="32" viewBox="-16 -16 32 32" fill="none" stroke="#4b4b4d" strokeWidth="2.4">
                <path d={d} />
              </svg>
            </RoundButton>
          ))}
        </Controls>
      </ChartBox>
      <Dates>
        <span>2023-05-10</span>
        <span>11-21</span>
        <span>06-11</span>
        <span>12-23</span>
        <span>07-11</span>
      </Dates>

      <Panel $h={181} $gap={7}>
        <VolumeChart />
        <PanelLegend $gap={13} $track={-0.5}>
          <Chip $w={115} $size={25.5}>
            成交量 <Triangle $size={6.5} $h={9} $color="#5e5e60" $down />
          </Chip>
          <Reading $c="#d52f36">量:53.76万</Reading>
          <Reading>M5:70.18万</Reading>
          <Reading $c="#ea7038">M10:44.73万</Reading>
          <Reading>换手率:<Tint $c="#3a9dd6">8.36%</Tint></Reading>
        </PanelLegend>
      </Panel>
      <Panel $h={179} $gap={4}>
        <MacdChart />
        <PanelLegend $gap={12} $track={0.4}>
          <Chip $w={213} $size={25.5} $track={0.3}>
            MACD(12,26,9) <Triangle $size={6.5} $h={9} $color="#5e5e60" $down />
          </Chip>
          <Help>?</Help>
          <Reading $c="#d52f36">MACD:+0.32</Reading>
          <Reading>DIFF:+0.31</Reading>
          <Guide>查看指标战法</Guide>
        </PanelLegend>
        <SecondLine>DEA:+0.15</SecondLine>
      </Panel>
      <Strip $h={9} />

      <Tabs>
        <Tab $w={113}>看点</Tab>
        <Tab $w={112}>资讯</Tab>
        <Tab $w={113}>盘口</Tab>
        <Tab $w={112}>资金</Tab>
        <Tab $w={99}>社区</Tab>
        <Tab $w={195} $on>简况(F10)</Tab>
        <Tab $w={60} $faded>财</Tab>
      </Tabs>
      <BottomBar>
        <Sector>
          <Triangle $size={9} $h={11} $color="#b0b0b0" />
          <SectorName>光伏设备</SectorName>
          <Fall>-0.18%</Fall>
        </Sector>
        <Action><OrderIcon />下单</Action>
        <Action><DiagnoseIcon />诊股</Action>
        <Action><RemoveIcon />删自选</Action>
        <Action><MenuIcon />功能</Action>
        <HomeBar />
        <Watermark>
          <svg width="28" height="28" viewBox="0 0 28 28" fill="none" stroke="#cfcfcf" strokeWidth="2.6">
            <circle cx="14" cy="14" r="12.300" />
            <path d="M7 4c6 5 7 9 0 19M21 4c-7 6-7 12 1 20" />
          </svg>
          <span>雪球<Colon>：</Colon>飞s44</span>
        </Watermark>
      </BottomBar>
    </Page>
  </>
);

export default App;
